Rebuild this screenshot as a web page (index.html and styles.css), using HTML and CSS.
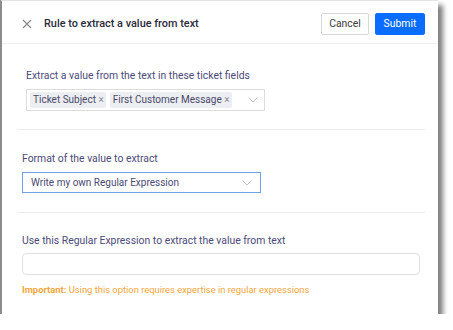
FILE: index.html
```html
<!DOCTYPE html>
<html>
<head>
<meta charset="utf-8">
<link rel="stylesheet" href="styles.css">
</head>
<body>
<div class="dialog">
  <div class="header">
    <svg class="close" width="10" height="10" viewBox="0 0 10 10"><path d="M1 1L9 9M9 1L1 9" stroke="#8a8a8a" stroke-width="1.2" fill="none"/></svg>
    <div class="title">Rule to extract a value from text</div>
    <div class="actions">
      <button class="btn btn-cancel">Cancel</button>
      <button class="btn btn-submit">Submit</button>
    </div>
  </div>
  <div class="section s1">
    <div class="label">Extract a value from the text in these ticket fields</div>
    <div class="multi">
      <span class="tag">Ticket Subject <span class="x">×</span></span>
      <span class="tag">First Customer Message <span class="x">×</span></span>
      <svg class="chev" width="10" height="6" viewBox="0 0 10 6"><path d="M0.5 0.5L5 5L9.5 0.5" stroke="#c4c4c4" stroke-width="1" fill="none"/></svg>
    </div>
  </div>
  <div class="section s2">
    <div class="label">Format of the value to extract</div>
    <div class="select">
      <span>Write my own Regular Expression</span>
      <svg class="chev" width="10" height="6" viewBox="0 0 10 6"><path d="M0.5 0.5L5 5L9.5 0.5" stroke="#c4c4c4" stroke-width="1" fill="none"/></svg>
    </div>
  </div>
  <div class="section s3">
    <div class="label">Use this Regular Expression to extract the value from text</div>
    <div class="input"></div>
    <div class="note"><b>Important:</b> Using this option requires expertise in regular expressions</div>
  </div>
</div>
</body>
</html>
```
FILE: styles.css
```css
html, body {
  margin: 0;
  padding: 0;
  background: #fff;
}
body {
  font-family: Roboto, "Liberation Sans", sans-serif;
  font-size: 10.4px;
}
.dialog {
  width: 436px;
  height: 313px;
  background: #fff;
  border-left: 2px solid #8c8c8c;
  border-top: 1px solid #e4e4e4;
  box-shadow: 5px 5px 5px rgba(0, 0, 0, 0.5);
  display: flex;
  flex-direction: column;
}
.header {
  height: 43px;
  box-sizing: border-box;
  border-bottom: 1px solid #efefef;
  display: flex;
  align-items: center;
  padding: 3px 13px 0 20px;
}
.close {
  display: block;
}
.title {
  margin-left: 12px;
  font-weight: 500;
  font-size: 10.9px;
  color: #2b2b3a;
}
.actions {
  margin-left: auto;
  display: flex;
  gap: 6px;
}
.btn {
  height: 22px;
  font-family: inherit;
  font-size: 10.4px;
  border-radius: 2px;
  padding: 0 7px;
  cursor: pointer;
}
.btn-cancel {
  width: 48px;
  background: #fff;
  border: 1px solid #d6d6d6;
  color: #3a3a3a;
}
.btn-submit {
  width: 50px;
  background: #0a6dfd;
  border: 1px solid #0a6dfd;
  color: #fff;
}
.section {
  margin: 0 13px 0 15px;
  border-bottom: 1px solid #ededed;
}
.label {
  color: #4c4a78;
  font-size: 10.4px;
  line-height: 15px;
}
.s1 {
  padding: 24px 0 18px 9px;
}
.s1 .label {
  margin-bottom: 6px;
}
.multi {
  width: 234px;
  height: 20px;
  border: 1px solid #dcdcdc;
  display: flex;
  align-items: center;
  padding-left: 3px;
  gap: 4px;
}
.tag {
  background: #eceef2;
  color: #4a4a6a;
  height: 16px;
  line-height: 16px;
  padding: 0 2px 0 3px;
  border-radius: 2px;
  font-size: 10px;
  white-space: nowrap;
}
.tag .x {
  color: #8a8a9a;
}
.multi .chev {
  margin-left: auto;
  margin-right: 6px;
}
.s2 {
  padding: 21px 0 19px 5px;
}
.s2 .label {
  margin-bottom: 6px;
}
.select {
  width: 221px;
  height: 19px;
  border: 1px solid #6ea2e6;
  display: flex;
  align-items: center;
  padding: 0 8px 0 8px;
  color: #4a4a72;
  font-size: 10px;
}
.select .chev {
  margin-left: auto;
}
.s3 {
  border-bottom: none;
  padding: 20px 0 0 5px;
}
.s3 .label {
  margin-bottom: 5px;
}
.input {
  width: 396px;
  height: 20px;
  border: 1px solid #e0e0e0;
  border-radius: 4px;
}
.note {
  margin-top: 9px;
  color: #f4a63a;
  font-size: 9.4px;
}
.note b {
  font-weight: 700;
}
```
